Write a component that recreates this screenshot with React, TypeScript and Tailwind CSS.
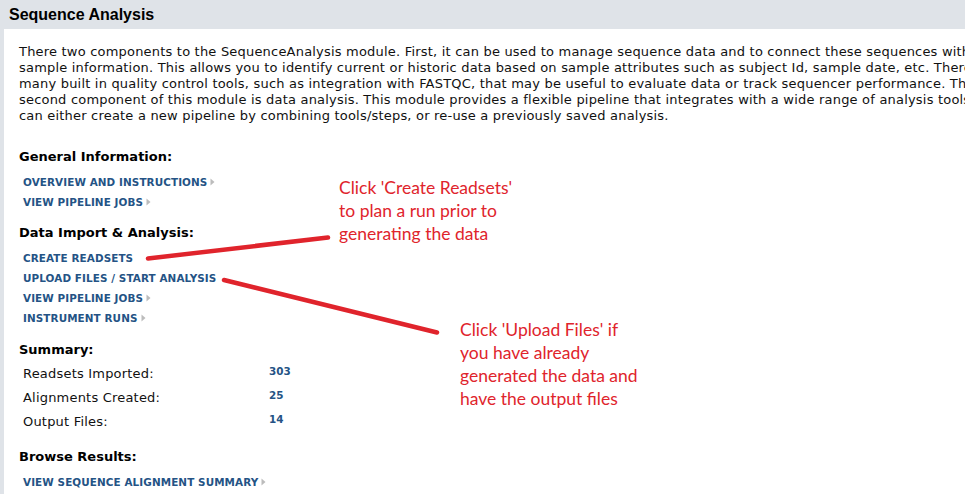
import React from "react";

const verdana = { fontFamily: '"DejaVu Sans", Verdana, sans-serif' };

function Arrow() {
  return (
    <svg width="5" height="8" viewBox="0 0 5 8" className="ml-[3px] inline-block">
      <path d="M0.5 0.5 L4.5 4 L0.5 7.5 Z" fill="#bcbcbc" />
    </svg>
  );
}

function NavLink({ label, arrow = true }: { label: string; arrow?: boolean }) {
  return (
    <div className="h-[20px] flex items-center pl-[4px]">
      <span className="text-[10.4px] font-bold text-[#245385] tracking-[0.1px] leading-none">{label}</span>
      {arrow && <Arrow />}
    </div>
  );
}

function Heading({ children }: { children: React.ReactNode }) {
  return <div className="h-[16px] leading-[16px] text-[13px] font-bold text-black">{children}</div>;
}

const lines = [
  "There two components to the SequenceAnalysis module. First, it can be used to manage sequence data and to connect these sequences with",
  "sample information. This allows you to identify current or historic data based on sample attributes such as subject Id, sample date, etc. There are",
  "many built in quality control tools, such as integration with FASTQC, that may be useful to evaluate data or track sequencer performance. The",
  "second component of this module is data analysis. This module provides a flexible pipeline that integrates with a wide range of analysis tools. The user",
  "can either create a new pipeline by combining tools/steps, or re-use a previously saved analysis.",
];

export default function App() {
  return (
    <div className="relative w-[965px] h-[494px] overflow-hidden bg-[#dfe3e8]" style={verdana}>
      <div
        className="h-[29px] pl-[9px] flex items-center text-[16px] font-bold text-black"
        style={{ fontFamily: '"Liberation Sans", Arial, sans-serif' }}
      >
        Sequence Analysis
      </div>
      <div className="ml-[4px] h-[465px] bg-white pl-[15px] pt-[15px] overflow-hidden">
        <div className="text-[13px] leading-[16px] text-[#111] whitespace-nowrap tracking-[0.2px]">
          {lines.map((l, i) => (
            <div key={i}>{l}</div>
          ))}
        </div>

        <div className="mt-[25px]">
          <Heading>General Information:</Heading>
          <div className="mt-[7px]">
            <NavLink label="OVERVIEW AND INSTRUCTIONS" />
            <NavLink label="VIEW PIPELINE JOBS" />
          </div>
        </div>

        <div className="mt-[13px]">
          <Heading>Data Import &amp; Analysis:</Heading>
          <div className="mt-[7px]">
            <NavLink label="CREATE READSETS" arrow={false} />
            <NavLink label="UPLOAD FILES / START ANALYSIS" arrow={false} />
            <NavLink label="VIEW PIPELINE JOBS" />
            <NavLink label="INSTRUMENT RUNS" />
          </div>
        </div>

        <div className="mt-[14px]">
          <Heading>Summary:</Heading>
          <div className="mt-[4px] pl-[4px]">
            {[
              ["Readsets Imported:", "303"],
              ["Alignments Created:", "25"],
              ["Output Files:", "14"],
            ].map(([k, v]) => (
              <div key={k} className="h-[24px] flex items-center">
                <span className="w-[246px] text-[13px] text-[#111] tracking-[0.2px]">{k}</span>
                <span className="text-[10.4px] font-bold text-[#245385] -mt-[4px]">{v}</span>
              </div>
            ))}
          </div>
        </div>

        <div className="mt-[15px]">
          <Heading>Browse Results:</Heading>
          <div className="mt-[7px]">
            <NavLink label="VIEW SEQUENCE ALIGNMENT SUMMARY" />
          </div>
        </div>
      </div>

      <svg className="absolute left-0 top-0 pointer-events-none" width="965" height="494">
        <path d="M148 258.5 L328 237.5" stroke="#e0242c" strokeWidth="4.5" strokeLinecap="round" fill="none" />
        <path d="M224 280 L437 332.5" stroke="#e0242c" strokeWidth="4.5" strokeLinecap="round" fill="none" />
      </svg>

      <div
        className="absolute left-[339px] top-[176px] text-[17.5px] leading-[23px] text-[#e0242c]"
        style={{ fontFamily: 'Lato, "Open Sans", sans-serif' }}
      >
        <div>Click 'Create Readsets'</div>
        <div>to plan a run prior to</div>
        <div>generating the data</div>
      </div>
      <div
        className="absolute left-[460px] top-[318px] text-[17.5px] leading-[23px] text-[#e0242c]"
        style={{ fontFamily: 'Lato, "Open Sans", sans-serif' }}
      >
        <div>Click 'Upload Files' if</div>
        <div>you have already</div>
        <div>generated the data and</div>
        <div>have the output files</div>
      </div>
    </div>
  );
}
